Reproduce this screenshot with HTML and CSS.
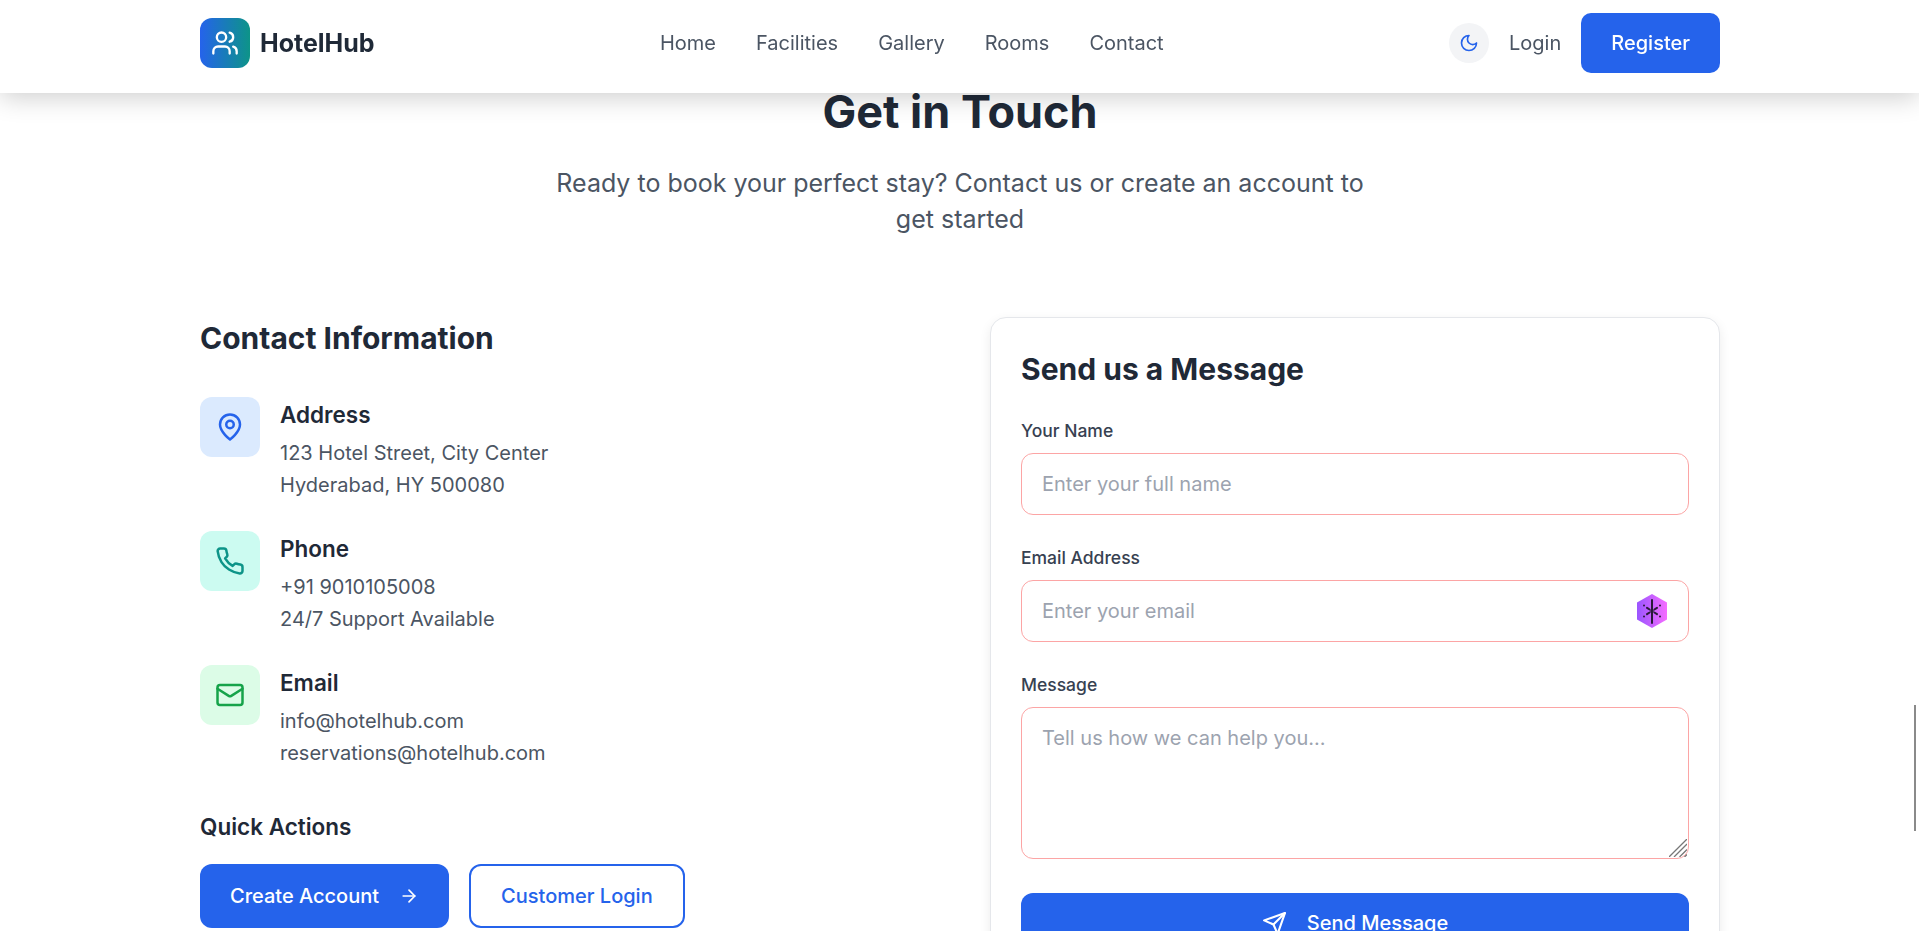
FILE: index.html
```html
<!DOCTYPE html>
<html lang="en">
<head>
<meta charset="utf-8">
<title>HotelHub</title>
<link rel="stylesheet" href="styles.css">
</head>
<body>
<header class="site-header">
  <div class="header-inner">
    <a class="brand" href="#">
      <span class="brand-mark">
        <svg class="icon-brand" viewBox="0 0 24 24"><path d="M16 21v-2a4 4 0 0 0-4-4H6a4 4 0 0 0-4 4v2"/><circle cx="9" cy="7" r="4"/><path d="M22 21v-2a4 4 0 0 0-3-3.870"/><path d="M16 3.130a4 4 0 0 1 0 7.750"/></svg>
      </span>
      <span class="brand-name">HotelHub</span>
    </a>
    <nav class="main-nav">
      <a href="#">Home</a>
      <a href="#">Facilities</a>
      <a href="#">Gallery</a>
      <a href="#">Rooms</a>
      <a href="#">Contact</a>
    </nav>
    <div class="header-actions">
      <button class="theme-toggle" type="button" aria-label="Toggle theme">
        <svg class="icon-moon" viewBox="0 0 24 24"><path d="M12 3a6 6 0 0 0 9 9 9 9 0 1 1-9-9Z"/></svg>
      </button>
      <a class="login-link" href="#">Login</a>
      <a class="register-btn" href="#">Register</a>
    </div>
  </div>
</header>

<main class="contact">
  <div class="contact-head">
    <h1>Get in Touch</h1>
    <p>Ready to book your perfect stay? Contact us or create an account to get started</p>
  </div>
  <div class="contact-grid">
    <section class="info">
      <h2>Contact Information</h2>
      <div class="info-list">
        <div class="info-item">
          <span class="info-icon tone-blue">
            <svg viewBox="0 0 24 24"><path d="M20 10c0 6-8 12-8 12s-8-6-8-12a8 8 0 0 1 16 0Z"/><circle cx="12" cy="10" r="3"/></svg>
          </span>
          <div>
            <h3>Address</h3>
            <p>123 Hotel Street, City Center<br>Hyderabad, HY 500080</p>
          </div>
        </div>
        <div class="info-item">
          <span class="info-icon tone-teal">
            <svg viewBox="0 0 24 24"><path d="M22 16.920v3a2 2 0 0 1-2.180 2 19.790 19.790 0 0 1-8.630-3.070 19.500 19.500 0 0 1-6-6 19.790 19.790 0 0 1-3.070-8.670A2 2 0 0 1 4.110 2h3a2 2 0 0 1 2 1.720 12.840 12.840 0 0 0 .7 2.810 2 2 0 0 1-.45 2.110L8.090 9.910a16 16 0 0 0 6 6l1.270-1.270a2 2 0 0 1 2.110-.45 12.840 12.840 0 0 0 2.810.7A2 2 0 0 1 22 16.920z"/></svg>
          </span>
          <div>
            <h3>Phone</h3>
            <p>+91 9010105008<br>24/7 Support Available</p>
          </div>
        </div>
        <div class="info-item">
          <span class="info-icon tone-green">
            <svg viewBox="0 0 24 24"><rect x="2" y="4" width="20" height="16" rx="2"/><path d="m22 7-8.970 5.700a1.940 1.940 0 0 1-2.060 0L2 7"/></svg>
          </span>
          <div>
            <h3>Email</h3>
            <p>info@hotelhub.com<br>reservations@hotelhub.com</p>
          </div>
        </div>
      </div>
      <h4>Quick Actions</h4>
      <div class="quick-actions">
        <a class="btn btn-solid" href="#">Create Account
          <svg class="icon-arrow" viewBox="0 0 24 24"><path d="M5 12h14"/><path d="m12 5 7 7-7 7"/></svg>
        </a>
        <a class="btn btn-outline" href="#">Customer Login</a>
      </div>
    </section>

    <form class="message-card">
      <h2>Send us a Message</h2>
      <div class="field">
        <label for="name">Your Name</label>
        <input id="name" type="text" placeholder="Enter your full name">
      </div>
      <div class="field">
        <label for="email">Email Address</label>
        <div class="input-wrap">
          <input id="email" type="text" placeholder="Enter your email">
          <svg class="ext-badge" viewBox="0 0 30 34">
            <defs><linearGradient id="hex" x1="0" y1="0" x2="1" y2="0"><stop offset="0" stop-color="#9a55ff"/><stop offset="1" stop-color="#f56cff"/></linearGradient></defs>
            <path class="hex-bg" d="M15 0 30 8.500v17L15 34 0 25.500v-17Z"/>
            <path class="hex-lines" d="M15 6v23M7 11.500h.01M10 13.800l2.600 1.700M23 11.500h.01M20 13.800l-2.600 1.700M7 22.500h.01M10 20.200l2.600-1.700M23 22.500h.01M20 20.200l-2.600-1.700"/>
            <circle class="hex-dot" cx="15" cy="17" r="1.800"/>
          </svg>
        </div>
      </div>
      <div class="field field-last">
        <label for="message">Message</label>
        <div class="input-wrap">
          <textarea id="message" placeholder="Tell us how we can help you..."></textarea>
          <svg class="resize-grip" viewBox="0 0 18 18"><path d="M0 18 18 0M5 18 18 5M10.500 18 18 10.500M15.500 18 18 15.500"/></svg>
        </div>
      </div>
      <button class="send-btn" type="button">
        <svg class="icon-send" viewBox="0 0 24 24"><path d="m22 2-7 20-4-9-9-4Z"/><path d="M22 2 11 13"/></svg>
        Send Message
      </button>
    </form>
  </div>
</main>
<div class="scroll-thumb"></div>
</body>
</html>
```
FILE: styles.css
```css
* { box-sizing: border-box; }
html, body { margin: 0; height: 100%; overflow: hidden; }
body { background: #fff; font-family: Inter, "Liberation Sans", sans-serif; color: #1f2937; }
a { text-decoration: none; color: inherit; }
svg { fill: none; stroke: currentColor; stroke-width: 2; stroke-linecap: round; stroke-linejoin: round; display: block; }

.site-header { position: fixed; top: 0; left: 0; right: 0; height: 93px; background: #fff; box-shadow: 0 4px 25px rgba(0,0,0,.2); z-index: 10; }
.header-inner { width: 1520px; height: 86px; margin-left: 200px; display: flex; align-items: center; justify-content: space-between; }
.brand { display: flex; align-items: center; gap: 10px; }
.brand-mark { width: 50px; height: 50px; border-radius: 12px; background: linear-gradient(90deg, #2563eb, #0d9488); display: flex; align-items: center; justify-content: center; color: #fff; }
.icon-brand { width: 28px; height: 28px; }
.brand-name { font-size: 25px; font-weight: 700; color: #1f2937; }
.main-nav { display: flex; gap: 40px; font-size: 20px; font-weight: 400; color: #4b5563; }
.header-actions { display: flex; align-items: center; gap: 20px; }
.theme-toggle { width: 40px; height: 40px; border: 0; padding: 0; border-radius: 50%; background: #f3f4f6; color: #2563eb; display: flex; align-items: center; justify-content: center; }
.icon-moon { width: 20px; height: 20px; }
.login-link { font-size: 20px; font-weight: 400; color: #4b5563; }
.register-btn { height: 60px; padding: 0 30px; border-radius: 10px; background: #2563eb; color: #fff; font-size: 20px; font-weight: 500; display: flex; align-items: center; }

.contact { width: 1520px; margin-left: 200px; padding-top: 83px; }
.contact-head { text-align: center; margin-bottom: 80px; }
.contact-head h1 { margin: 0 0 25px; font-size: 45px; line-height: 58px; font-weight: 700; color: #1f2937; }
.contact-head p { margin: 0 auto; max-width: 820px; font-size: 25px; line-height: 35.500px; color: #4b5563; }
.contact-grid { display: grid; grid-template-columns: 730px 730px; gap: 60px; }

.info h2 { margin: 0 0 38px; font-size: 30px; line-height: 42px; font-weight: 700; color: #1f2937; }
.info-list { display: flex; flex-direction: column; gap: 30px; }
.info-item { display: flex; gap: 20px; }
.info-icon { width: 60px; height: 60px; border-radius: 12px; display: flex; align-items: center; justify-content: center; flex: none; }
.info-icon svg { width: 30px; height: 30px; }
.tone-blue { background: #dbeafe; color: #2563eb; }
.tone-teal { background: #ccfbf1; color: #0d9488; }
.tone-green { background: #dcfce7; color: #16a34a; }
.info-item h3 { margin: 0 0 5px; font-size: 22.500px; line-height: 35px; font-weight: 600; color: #1f2937; }
.info-item p { margin: 0; font-size: 20px; line-height: 32px; color: #4b5563; }
.info h4 { margin: 40px 0 20px; font-size: 22.500px; line-height: 35px; font-weight: 600; color: #1f2937; }
.quick-actions { display: flex; gap: 20px; }
.btn { display: flex; align-items: center; height: 64px; border-radius: 12px; font-size: 20px; font-weight: 500; padding: 0 30px; }
.btn-solid { background: #2563eb; color: #fff; gap: 20px; }
.btn-outline { border: 2px solid #2563eb; color: #2563eb; }
.icon-arrow { width: 20px; height: 20px; }

.message-card { border: 1px solid #e5e7eb; border-radius: 16px; padding: 30px; background: #fff; box-shadow: 0 4px 12px rgba(0,0,0,.08); height: 700px; }
.message-card h2 { margin: 0 0 28px; font-size: 30px; line-height: 42px; font-weight: 700; color: #1f2937; }
.field { margin-bottom: 30px; }
.field-last { margin-bottom: 34px; }
.field label { display: block; margin-bottom: 9px; font-size: 17.500px; line-height: 26px; font-weight: 500; color: #374151; }
.field input, .field textarea { display: block; width: 100%; border: 1px solid #fca5a5; border-radius: 12px; background: #fff; font-family: inherit; font-size: 20px; line-height: 24px; color: #1f2937; padding: 18px 20px; outline: 0; }
.field textarea { height: 152px; resize: none; }
.field input::placeholder, .field textarea::placeholder { color: #9ca3af; opacity: 1; }
.input-wrap { position: relative; }
.ext-badge { position: absolute; right: 22px; top: 14px; width: 30px; height: 34px; }
.hex-bg { fill: url(#hex); stroke: none; }
.hex-lines { stroke: #2a1a3a; stroke-width: 2; stroke-linecap: round; }
.hex-dot { fill: #2a1a3a; stroke: none; }
.resize-grip { position: absolute; right: 2px; bottom: 2px; width: 18px; height: 18px; color: #777; stroke-width: 1.300; stroke-linecap: butt; }
.send-btn { width: 100%; height: 60px; border: 0; border-radius: 12px; background: #2563eb; color: #fff; font-family: inherit; font-size: 20px; font-weight: 500; display: flex; align-items: center; justify-content: center; gap: 20px; }
.icon-send { width: 25px; height: 25px; }

.scroll-thumb { position: fixed; left: 1914px; top: 705px; width: 2px; height: 126px; background: #8a8a8a; z-index: 20; }
```
